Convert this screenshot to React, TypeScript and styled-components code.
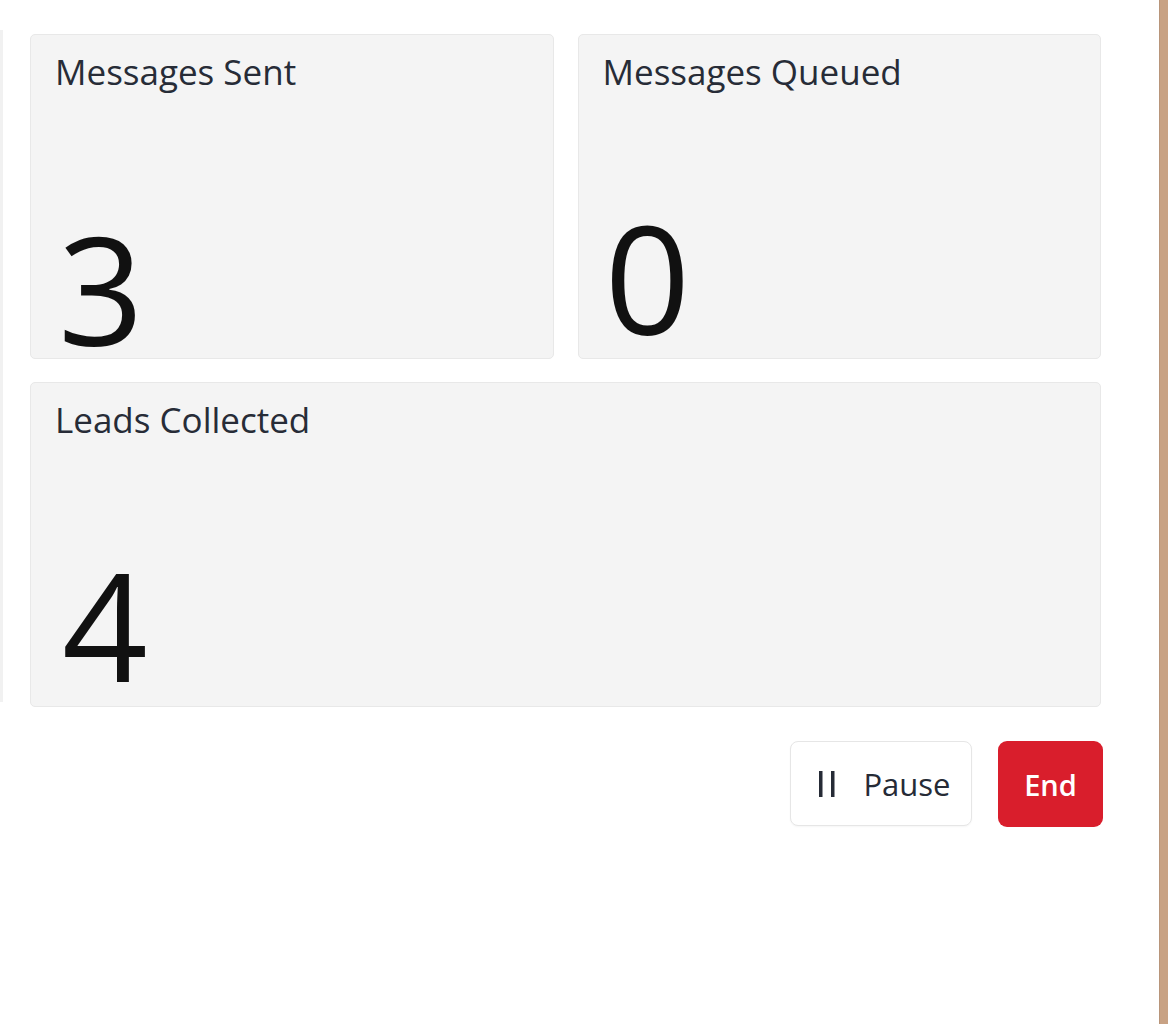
import React from "react";
import styled, { createGlobalStyle } from "styled-components";

const Global = createGlobalStyle`
  html, body { margin: 0; padding: 0; background: #ffffff; }
  body { font-family: "Open Sans", "Noto Sans", sans-serif; }
`;

const Page = styled.div`
  display: flex;
  width: 1168px;
  height: 1024px;
  overflow: hidden;
  background: #ffffff;
`;

const LeftEdge = styled.div`
  width: 3px;
  margin-top: 30px;
  height: 672px;
  background: #f1f1f1;
  flex: none;
`;

const Main = styled.main`
  flex: 1;
  padding: 34px 56px 0 27px;
  display: flex;
  flex-direction: column;
`;

const RightBar = styled.div`
  width: 11px;
  flex: none;
  background: #c8a284;
  border-left: 1px solid #b8957a;
`;

const Grid = styled.div`
  display: grid;
  grid-template-columns: 1fr 1fr;
  column-gap: 24px;
  row-gap: 23px;
  width: 1071px;
`;

const Card = styled.section<{ $wide?: boolean }>`
  grid-column: ${(p) => (p.$wide ? "1 / span 2" : "auto")};
  height: 325px;
  box-sizing: border-box;
  background: #f4f4f4;
  border: 1px solid #e8e8e8;
  border-radius: 5px;
  padding: 15px 24px 0 24px;
  display: flex;
  flex-direction: column;
  justify-content: space-between;
`;

const Label = styled.div`
  font-family: "Open Sans", "Noto Sans", sans-serif;
  font-size: 35px;
  line-height: 44px;
  color: #272c37;
`;

const Value = styled.div<{ $shift?: number; $indent?: number }>`
  font-family: "Open Sans", "Noto Sans", sans-serif;
  font-weight: 380;
  font-size: 150px;
  line-height: 150px;
  color: #111111;
  margin-bottom: ${(p) => p.$shift ?? 0}px;
  margin-left: ${(p) => p.$indent ?? 2}px;
`;

const Actions = styled.div`
  display: flex;
  justify-content: flex-end;
  gap: 26px;
  margin-top: 34px;
  width: 1073px;
`;

const PauseButton = styled.button`
  width: 182px;
  height: 85px;
  box-sizing: border-box;
  background: #ffffff;
  border: 1px solid #e6e6e6;
  border-radius: 8px;
  box-shadow: 0 1px 2px rgba(0, 0, 0, 0.04);
  display: flex;
  align-items: center;
  justify-content: center;
  gap: 28px;
  font-family: "Open Sans", "Noto Sans", sans-serif;
  font-size: 31px;
  color: #262b36;
  padding: 0 0 0 8px;
  cursor: pointer;
`;

const EndButton = styled.button`
  width: 105px;
  height: 86px;
  box-sizing: border-box;
  background: #d91e2c;
  border: none;
  border-radius: 9px;
  font-family: "Open Sans", "Noto Sans", sans-serif;
  font-weight: 600;
  font-size: 29px;
  color: #ffffff;
  cursor: pointer;
`;

const PauseIcon = () => (
  <svg width="16" height="26" viewBox="0 0 16 26" aria-hidden="true">
    <rect x="0" y="0" width="3.5" height="26" fill="#262b36" />
    <rect x="12" y="0" width="3.5" height="26" fill="#262b36" />
  </svg>
);

const stats = [
  { label: "Messages Sent", value: "3", shift: -5, indent: 3 },
  { label: "Messages Queued", value: "0", shift: 6, indent: 2 },
];

export default function App() {
  return (
    <Page>
      <Global />
      <LeftEdge />
      <Main>
        <Grid>
          {stats.map((s) => (
            <Card key={s.label}>
              <Label>{s.label}</Label>
              <Value $shift={s.shift} $indent={s.indent}>
                {s.value}
              </Value>
            </Card>
          ))}
          <Card $wide>
            <Label>Leads Collected</Label>
            <Value $shift={7} $indent={7}>
              4
            </Value>
          </Card>
        </Grid>
        <Actions>
          <PauseButton>
            <PauseIcon />
            <span>Pause</span>
          </PauseButton>
          <EndButton>End</EndButton>
        </Actions>
      </Main>
      <RightBar />
    </Page>
  );
}
